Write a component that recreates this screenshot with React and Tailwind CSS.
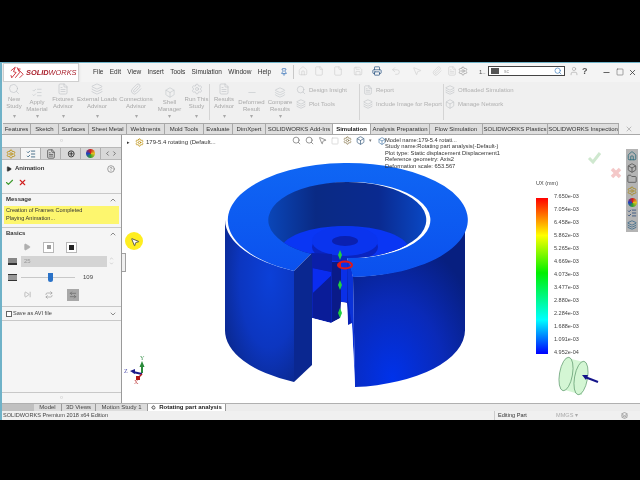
import {
  Search, Home, File, Save, Printer, Undo2, MousePointer2, Settings, User, X, Minus, Square,
  ChevronUp, ChevronDown, Check, Play, Pin, ListChecks, Paperclip, FileText, Layers, Box,
  HelpCircle, Folder, Repeat, ArrowLeftRight, SkipForward, ChevronLeft, ChevronRight, Rotate3d,
} from 'lucide-react';

const MENU = ['File', 'Edit', 'View', 'Insert', 'Tools', 'Simulation', 'Window', 'Help'];

const TABS = [
  ['Features', 'w-[28px]'],
  ['Sketch', 'w-[28px]'],
  ['Surfaces', 'w-[30px]'],
  ['Sheet Metal', 'w-[38px]'],
  ['Weldments', 'w-[38px]'],
  ['Mold Tools', 'w-[39px]'],
  ['Evaluate', 'w-[29px]'],
  ['DimXpert', 'w-[33px]'],
  ['SOLIDWORKS Add-Ins', 'w-[67px]'],
  ['Simulation', 'w-[38px]'],
  ['Analysis Preparation', 'w-[59px]'],
  ['Flow Simulation', 'w-[53px]'],
  ['SOLIDWORKS Plastics', 'w-[65px]'],
  ['SOLIDWORKS Inspection', 'w-[71px]'],
];

// label, column width, icon, top offset (some buttons sit lower in the ribbon)
const RIBBON = [
  ['New\nStudy', 'w-[22px]', Search, 'mt-[1px]'],
  ['Apply\nMaterial', 'w-[24px]', ListChecks, 'mt-[5px]'],
  ['Fixtures\nAdvisor', 'w-[28px]', FileText, 'mt-[1px]'],
  ['External Loads\nAdvisor', 'w-[40px]', Layers, 'mt-[1px]'],
  ['Connections\nAdvisor', 'w-[38px]', Paperclip, 'mt-[1px]'],
  ['Shell\nManager', 'w-[29px]', Box, 'mt-[5px]'],
  ['Run This\nStudy', 'w-[25px]', Settings, 'mt-[1px]'],
];

const RESULTS = [
  ['Results\nAdvisor', 'w-[28px]', FileText, 'mt-[1px]'],
  ['Deformed\nResult', 'w-[27px]', Minus, 'mt-[5px]'],
  ['Compare\nResults', 'w-[30px]', Layers, 'mt-[5px]'],
];

const QUICK = [
  ['w-[14px]', Home, 'text-[#c4c4c4]', 1.2],
  ['w-[18px]', File, 'text-[#c4c4c4]', 1.2],
  ['w-[20px]', File, 'text-[#c4c4c4]', 1.2],
  ['w-[20px]', Save, 'text-[#c4c4c4]', 1.2],
  ['w-[18px]', Printer, 'text-[#244f80]', 1.7],
  ['w-[19px]', Undo2, 'text-[#c4c4c4]', 1.2],
  ['w-[23px]', MousePointer2, 'text-[#c4c4c4]', 1.2],
  ['w-[18px]', Paperclip, 'text-[#c4c4c4]', 1.2],
  ['w-[12px]', FileText, 'text-[#c4c4c4]', 1.2],
  ['w-[10px]', Settings, 'text-[#808080]', 1.3],
];

const LEGEND = [
  '7.650e-03', '7.054e-03', '6.458e-03', '5.862e-03', '5.265e-03', '4.669e-03', '4.073e-03',
  '3.477e-03', '2.880e-03', '2.284e-03', '1.688e-03', '1.091e-03', '4.952e-04',
];

const STUDY_INFO = [
  'Model name:179-5.4 rotati...',
  'Study name:Rotating part analysis(-Default-)',
  'Plot type: Static displacement Displacement1',
  'Reference geometry: Axis2',
  'Deformation scale: 653.567',
];

function RibbonButton({ label, width, Icon, offset }) {
  return (
    <div className={`${width} flex flex-col items-center text-center shrink-0 h-[38px]`}>
      <Icon size={12} strokeWidth={1.2} className={`text-[#bcc0c4] mb-[1px] ${offset}`} />
      <div className="text-[6px] leading-[7px] text-[#a8a8a8] whitespace-pre">{label}</div>
      <div className="text-[6px] leading-[7px] text-[#a8a8a8] mt-auto">▾</div>
    </div>
  );
}

function SmallRibbonItem({ label, Icon }) {
  return (
    <div className="flex items-center gap-[3px] h-[14px] text-[6px] text-[#b0b0b0] whitespace-nowrap">
      <Icon size={10} strokeWidth={1.2} className="text-[#b4b8bc]" />
      {label}
    </div>
  );
}

function Logo() {
  return (
    <div className="w-[76px] h-[19px] ml-[1px] bg-white border border-[#cfcfcf] shadow-sm flex items-center pl-[6px] gap-[2px] shrink-0">
      <svg viewBox="0 0 16 14" className="w-[14px] h-[13px] shrink-0" fill="none" stroke="#c8202c" strokeWidth="1">
        <path d="M1 5 L6 1 L4 6 L7 7 L2 13 L1 10" />
        <path d="M8 1 L11 7 L6 13 M12 3 L9 3 L15 9 L11 13" />
      </svg>
      <span className="text-[7.4px] leading-none italic text-[#a81c28]">
        <b>SOLID</b>WORKS
      </span>
    </div>
  );
}

function TitleBar() {
  return (
    <div className="h-[19px] flex items-start bg-[#f4f4f4] shrink-0">
      <Logo />
      <div className="flex gap-[6.3px] ml-[14px] mt-[5px] text-[6.5px] leading-[8px] text-[#333] w-[187px] shrink-0">
        {MENU.map((m) => (
          <span key={m}>{m}</span>
        ))}
      </div>
      <Pin size={8} className="text-[#2060b0] mt-[5px] shrink-0" />
      <div className="w-px h-[14px] bg-[#c8c8c8] ml-[5px] mt-[2px] shrink-0" />
      <div className="flex items-center mt-[3px] ml-[2px] shrink-0">
        {QUICK.map(([width, Icon, color, stroke], i) => (
          <span key={i} className={`${width} flex justify-center`}>
            <Icon size={10} strokeWidth={stroke} className={color} />
          </span>
        ))}
      </div>
      <span className="text-[6px] leading-[8px] text-[#555] mt-[5px] ml-[11px] w-[9px] shrink-0">1..</span>
      <div className="w-[77px] h-[10px] mt-[3px] bg-white border border-[#444] flex items-center shrink-0">
        <span className="w-[8px] h-[6px] ml-[2px] bg-[#555]" />
        <span className="text-[5px] text-[#999] ml-[5px] leading-none">sc</span>
        <Search size={8} className="text-[#4080c0] ml-auto mr-[2px]" />
      </div>
      <User size={10} strokeWidth={1.2} className="text-[#909090] mt-[3px] ml-[4px] shrink-0" />
      <span className="text-[9px] leading-[10px] font-bold text-[#555] mt-[3px] ml-[3px] shrink-0">?</span>
      <Minus size={9} className="text-[#333] mt-[5px] ml-[14px] shrink-0" />
      <Square size={8} strokeWidth={1.3} className="text-[#333] mt-[5px] ml-[5px] shrink-0" />
      <X size={9} className="text-[#333] mt-[5px] ml-[4px] shrink-0" />
    </div>
  );
}

function Ribbon() {
  return (
    <div className="h-[40px] flex bg-[#f0f0f0] shrink-0 pl-[1px]">
      {RIBBON.map(([label, width, Icon, offset]) => (
        <RibbonButton key={label} label={label} width={width} Icon={Icon} offset={offset} />
      ))}
      <div className="w-px h-[36px] bg-[#d4d4d4] mt-[2px] shrink-0" />
      {RESULTS.map(([label, width, Icon, offset]) => (
        <RibbonButton key={label} label={label} width={width} Icon={Icon} offset={offset} />
      ))}
      <div className="w-[63px] ml-[1px] pt-[1px] shrink-0">
        <SmallRibbonItem label="Design Insight" Icon={Search} />
        <SmallRibbonItem label="Plot Tools" Icon={Layers} />
      </div>
      <div className="w-px h-[36px] bg-[#d4d4d4] mt-[2px] shrink-0" />
      <div className="w-[80px] ml-[3px] pt-[1px] shrink-0">
        <SmallRibbonItem label="Report" Icon={FileText} />
        <SmallRibbonItem label="Include Image for Report" Icon={Layers} />
      </div>
      <div className="w-px h-[36px] bg-[#d4d4d4] mt-[2px] shrink-0" />
      <div className="ml-[1px] pt-[1px] shrink-0">
        <SmallRibbonItem label="Offloaded Simulation" Icon={Layers} />
        <SmallRibbonItem label="Manage Network" Icon={Box} />
      </div>
    </div>
  );
}

function TabBar() {
  return (
    <div className="h-[13px] flex items-end bg-[#f0f0f0] border-b border-[#a8a8a8] shrink-0 pl-[1px]">
      {TABS.map(([label, width]) => (
        <div
          key={label}
          className={`${width} h-[11px] shrink-0 text-center text-[6px] leading-[10px] whitespace-nowrap border-r border-t border-[#a8a8a8] ${
            label === 'Simulation' ? 'bg-white font-bold text-[#222]' : 'bg-[#dedede] text-[#333]'
          }`}
        >
          {label}
        </div>
      ))}
      <X size={8} className="text-[#a0a0a0] ml-[6px] mb-[1px]" />
    </div>
  );
}

function PanelTabs() {
  return (
    <div className="h-[13px] flex border-y border-[#b8b8b8] bg-[#d8d8d8] shrink-0">
      <div className="w-[19px] flex items-center justify-center border-r border-[#b0b0b0]">
        <Settings size={10} className="text-[#b88a00]" />
      </div>
      <div className="w-[20px] flex items-center justify-center bg-[#f5f5f5] border-r border-[#b0b0b0]">
        <ListChecks size={10} className="text-[#2c5a78]" />
      </div>
      <div className="w-[20px] flex items-center justify-center border-r border-[#b0b0b0]">
        <FileText size={10} className="text-[#555]" />
      </div>
      <div className="w-[20px] flex items-center justify-center border-r border-[#b0b0b0] text-[#222] text-[10px] leading-none">
        ⊕
      </div>
      <div className="w-[20px] flex items-center justify-center border-r border-[#b0b0b0]">
        <span className="w-[9px] h-[9px] rounded-full bg-[conic-gradient(#d02020,#e0c020,#30a030,#2040c0,#d02020)]" />
      </div>
      <div className="flex-1 flex items-center justify-center text-[#333]">
        <ChevronLeft size={7} />
        <ChevronRight size={7} />
      </div>
    </div>
  );
}

function SectionHead({ title, children }) {
  return (
    <div className="flex items-center justify-between h-[12px] px-[4px] border-t border-[#c8c8c8]">
      <span className="text-[6px] font-bold text-[#333]">{title}</span>
      {children}
    </div>
  );
}

function LeftPanel() {
  return (
    <div className="w-[120px] h-full bg-[#f5f5f5] border-r border-[#9a9a9a] flex flex-col shrink-0">
      <div className="h-[12px] flex items-center justify-center text-[5px] text-[#888] shrink-0">○</div>
      <PanelTabs />
      <div className="flex items-center h-[15px] px-[4px] mt-[1px]">
        <Play size={6} fill="#333" className="text-[#333] mr-[3px]" />
        <span className="text-[6px] font-bold text-[#333]">Animation</span>
        <HelpCircle size={8} className="text-[#777] ml-auto mr-[2px]" />
      </div>
      <div className="flex items-center gap-[4px] h-[13px] px-[3px]">
        <Check size={9} strokeWidth={3} className="text-[#3c9a2c]" />
        <X size={9} strokeWidth={3} className="text-[#d02020]" />
      </div>
      <div className="h-[4px]" />
      <SectionHead title="Message">
        <ChevronUp size={8} className="text-[#555]" />
      </SectionHead>
      <div className="h-[18px] mx-[2px] mt-[1px] px-[2px] bg-[#fdf66e] text-[5.6px] leading-[8px] text-[#333]">
        <div>Creation of Frames Completed</div>
        <div>Playing Animation...</div>
      </div>
      <div className="h-[3px]" />
      <SectionHead title="Basics">
        <ChevronUp size={8} className="text-[#555]" />
      </SectionHead>
      <div className="h-[14px] flex items-center pl-[21px] gap-[12px] mt-[1px]">
        <Play size={8} fill="#b0b0b0" className="text-[#b0b0b0]" />
        <span className="w-[11px] h-[11px] border border-[#b8b8b8] bg-white flex items-center justify-center">
          <span className="w-[4px] h-[4px] bg-[#999]" />
        </span>
        <span className="w-[11px] h-[11px] border border-[#b8b8b8] bg-white flex items-center justify-center">
          <span className="w-[5px] h-[5px] bg-[#222]" />
        </span>
      </div>
      <div className="h-[14px] flex items-center px-[6px]">
        <span className="w-[9px] h-[7px] border-b-2 border-[#333] bg-[#888] shrink-0" />
        <span className="w-[86px] h-[11px] ml-[4px] bg-[#d4d4d4] text-[6px] leading-[11px] pl-[3px] text-[#999]">25</span>
        <span className="flex flex-col ml-[2px] text-[#aaa]">
          <ChevronUp size={5} />
          <ChevronDown size={5} />
        </span>
      </div>
      <div className="h-[19px] flex items-center px-[6px]">
        <span className="w-[9px] h-[7px] border-y border-[#333] bg-[#999] shrink-0" />
        <span className="relative w-[54px] h-[1px] bg-[#c8c8c8] ml-[4px]">
          <span className="absolute left-[27px] -top-[4px] w-[5px] h-[9px] bg-[#2a72c8] rounded-b-sm" />
        </span>
        <span className="text-[6px] text-[#444] ml-[8px]">109</span>
      </div>
      <div className="h-[15px] flex items-center pl-[22px] gap-[14px]">
        <SkipForward size={7} className="text-[#999]" />
        <Repeat size={8} className="text-[#999]" />
        <span className="w-[12px] h-[12px] bg-[#a8a8a8] flex items-center justify-center">
          <ArrowLeftRight size={8} className="text-[#666]" />
        </span>
      </div>
      <div className="h-[4px]" />
      <div className="flex items-center h-[15px] px-[4px] border-y border-[#c8c8c8]">
        <span className="w-[6px] h-[6px] border border-[#666] bg-white mr-[1px]" />
        <span className="text-[5.6px] text-[#444]">Save as AVI file</span>
        <ChevronDown size={8} className="text-[#555] ml-auto" />
      </div>
      <div className="mt-auto h-[11px] flex items-center justify-center border-t border-[#c8c8c8] text-[5px] text-[#888]">○</div>
    </div>
  );
}

function Model() {
  return (
    <svg viewBox="122 135 518 268" className="absolute inset-0 w-[518px] h-[268px]">
      <defs>
        <radialGradient id="wallL" cx="0.65" cy="0.35" r="0.8">
          <stop offset="0" stopColor="#0c40d8" />
          <stop offset="0.55" stopColor="#0c36c0" />
          <stop offset="1" stopColor="#0a2688" />
        </radialGradient>
        <radialGradient id="wallR" cx="0.35" cy="0.95" r="0.85">
          <stop offset="0" stopColor="#0032ea" />
          <stop offset="0.55" stopColor="#0a2ab8" />
          <stop offset="1" stopColor="#071f80" />
        </radialGradient>
        <linearGradient id="ring" x1="0" y1="0" x2="0" y2="1">
          <stop offset="0" stopColor="#0f66f4" />
          <stop offset="1" stopColor="#0b50ee" />
        </linearGradient>
        <linearGradient id="hole" x1="0" y1="0" x2="1" y2="0">
          <stop offset="0" stopColor="#0a46b8" />
          <stop offset="0.3" stopColor="#0a2a84" />
          <stop offset="0.7" stopColor="#0a2a90" />
          <stop offset="1" stopColor="#0a48c4" />
        </linearGradient>
        <linearGradient id="barColors" x1="0" y1="0" x2="0" y2="1">
          <stop offset="0" stopColor="#ff0000" />
          <stop offset="0.24" stopColor="#ffff00" />
          <stop offset="0.48" stopColor="#00f000" />
          <stop offset="0.78" stopColor="#00ffff" />
          <stop offset="1" stopColor="#0000ff" />
        </linearGradient>
        <clipPath id="holeClip">
          <path d="M312 254 A79 38 0 1 1 347 258 L347 262 L312 262Z" />
        </clipPath>
      </defs>

      <path d="M225 220 L225 330 A120 57 0 0 0 294 382 L294 271 A120 57 0 0 1 225 220Z" fill="url(#wallL)" />
      <path d="M353 277 L355 387 A120 57 0 0 0 465 330 L465 220 A120 57 0 0 1 353 277Z" fill="url(#wallR)" />

      {/* gap behind the cut */}
      <path d="M312 250 L352 262 L353 326 L348 326 L347 303 L341 302 L340 318 L331 323 L312 318Z" fill="#0a22b4" />
      <path d="M313 268 L331 272 L331 276 L313 293Z" fill="#0a2cf0" />
      <path d="M313 293 L331 276 L331 322 L313 318Z" fill="#0a1c98" />
      <path d="M332 255 L341 255 L341 318 L332 322Z" fill="#0a1a88" />
      <path d="M341 255 L347 255 L347 302 L341 302Z" fill="#0a30e8" />

      {/* top ring with the hole, hub and floor */}
      <path d="M294 271 A120 57 0 1 1 353 277 L347 258 A79 38 0 1 0 312 253Z" fill="url(#ring)" />
      <path d="M312 254 A79 38 0 1 1 347 258 L345 252 L312 252Z" fill="url(#hole)" />
      <g clipPath="url(#holeClip)">
        <ellipse cx="345" cy="250" rx="64" ry="24" fill="#0a36f4" />
        <ellipse cx="345" cy="247" rx="33" ry="15" fill="#0a24c0" />
        <ellipse cx="345" cy="241" rx="33" ry="15" fill="#0a34ee" />
        <ellipse cx="345" cy="241" rx="13" ry="5" fill="#0a20b0" />
      </g>
      <path d="M312 253 L332 254 L332 272 L312 268Z" fill="#0a1fa8" />

      {/* cut faces */}
      <path d="M294 271 L312 253 L312 365 L294 382Z" fill="#0a2790" />
      <path d="M347 258 L353 277 L355 387 L352 326 L348 300Z" fill="#0a32d8" />

      {/* open part of the gap */}
      <path d="M312 318 L331 323 L340 318 L341 302 L347 303 L348 325 L352 323 L355 387 L312 365Z" fill="#ffffff" />

      {/* displacement markers */}
      <path d="M340 250 L342 255 L340 260 L338 255Z M340 280 L342 285 L340 290 L338 285Z M340 308 L342 313 L340 318 L338 313Z" fill="#20d040" />
      <ellipse cx="345" cy="265" rx="7" ry="3.5" fill="none" stroke="#e01818" strokeWidth="2" />
      <path d="M337 265 L341 262 L341 268Z" fill="#e01818" />

      {/* legend */}
      <rect x="536" y="198" width="12" height="156" fill="url(#barColors)" />

      {/* orientation triad */}
      <path d="M142 373 L142 365" stroke="#2a8a3a" strokeWidth="2" />
      <path d="M142 361 L139.5 367 L144.5 367Z" fill="#2a8a3a" />
      <path d="M142 374 L133 372" stroke="#1a1a8a" strokeWidth="2" />
      <path d="M130 371 L135 369 L135 374Z" fill="#1a1a8a" />
      <rect x="136" y="376" width="4" height="4" fill="#b01818" />
      <path d="M142 374 L139 377" stroke="#b01818" strokeWidth="1.5" />
      <text x="140" y="360" fontSize="6" fill="#4a9a5a" fontFamily="Liberation Serif, serif">Y</text>
      <text x="124" y="373" fontSize="6" fill="#4a4aa8" fontFamily="Liberation Serif, serif">Z</text>
      <text x="134" y="384" fontSize="6" fill="#c04040" fontFamily="Liberation Serif, serif">X</text>

      {/* reference geometry symbol */}
      <path d="M567 358 L584 362 L582 395 L565 390Z" fill="#d4f6d4" />
      <ellipse cx="566" cy="374" rx="6.5" ry="17" transform="rotate(10 566 374)" fill="#d4f6d4" stroke="#4a8a5a" strokeWidth="0.6" />
      <ellipse cx="581" cy="378" rx="6.5" ry="17" transform="rotate(10 581 378)" fill="#d4f6d4" stroke="#4a8a5a" strokeWidth="0.6" />
      <path d="M598 382 L585 377" stroke="#14148a" strokeWidth="2" />
      <path d="M582 375 L588 375 L586 380Z" fill="#14148a" />

      {/* faded confirm corner */}
      <path d="M589 158 L593 162 L600 153" fill="none" stroke="#cfe8cf" strokeWidth="3" />
      <path d="M612 169 L620 177 M620 169 L612 177" stroke="#f4c8c8" strokeWidth="3.5" />
    </svg>
  );
}

function Canvas() {
  return (
    <div className="relative flex-1 h-full bg-white overflow-hidden">
      <Model />
      <div className="absolute left-[5px] top-[1px] flex items-center text-[6px] leading-[12px] text-[#333] whitespace-nowrap">
        <span className="text-[5px] mr-[5px]">▸</span>
        <Settings size={9} className="text-[#b88a00] mr-[2px]" />
        179-5.4 rotating (Default...
      </div>
      <div className="absolute left-[170px] top-[1px] flex items-center gap-[4px] text-[#777]">
        <Search size={9} />
        <Search size={9} />
        <MousePointer2 size={9} />
        <Square size={8} className="text-[#ccc]" />
        <Settings size={9} className="text-[#8a7a50]" />
        <Box size={9} className="text-[#4a6a88]" />
        <span className="text-[5px]">▾</span>
        <Box size={8} className="text-[#4a7aa8] ml-[2px]" />
      </div>
      <div className="absolute left-[263px] top-[2px] text-[5.75px] leading-[6.4px] text-[#333] whitespace-nowrap">
        {STUDY_INFO.map((line) => (
          <div key={line}>{line}</div>
        ))}
      </div>
      <div className="absolute left-[414px] top-[45px] text-[5.5px] leading-[7px] text-[#444]">UX (mm)</div>
      <div className="absolute left-[432px] top-[55px] flex flex-col text-[5.5px] leading-[13px] text-[#444]">
        {LEGEND.map((v) => (
          <span key={v}>{v}</span>
        ))}
      </div>
      <div className="absolute left-[504px] top-[14px] w-[12px] h-[83px] bg-[#b4b4b4] flex flex-col items-center justify-around py-[1px]">
        <Home size={10} className="text-[#2c6a7a]" />
        <Box size={10} className="text-[#555]" />
        <Folder size={10} className="text-[#555]" />
        <Settings size={10} className="text-[#a88a20]" />
        <span className="w-[9px] h-[9px] rounded-full bg-[conic-gradient(#d02020,#e0c020,#30a030,#2040c0,#d02020)]" />
        <ListChecks size={10} className="text-[#2c4a78]" />
        <Layers size={10} className="text-[#3c6a8a]" />
      </div>
      <div className="absolute left-[3px] top-[97px] w-[18px] h-[18px] rounded-full bg-[#ffee20]" />
      <MousePointer2 size={10} fill="#fff" className="absolute left-[8px] top-[102px] text-[#444]" />
      <div className="absolute left-0 top-[118px] w-[4px] h-[19px] bg-[#f0f0f0] border-y border-r border-[#a0a0a0]" />
    </div>
  );
}

function BottomTabs() {
  return (
    <div className="h-[8px] flex bg-[#ececec] border-t border-[#b0b0b0] shrink-0 text-[6px] leading-[7px] text-[#444]">
      <div className="w-[32px] bg-[#c0c0c0] shrink-0" />
      <span className="w-[28px] text-center bg-[#dcdcdc] border-r border-[#999] shrink-0">Model</span>
      <span className="w-[34px] text-center bg-[#dcdcdc] border-r border-[#999] shrink-0">3D Views</span>
      <span className="w-[52px] text-center bg-[#dcdcdc] border-r border-[#999] shrink-0">Motion Study 1</span>
      <span className="w-[78px] flex items-center justify-center gap-[3px] bg-white border-r border-[#999] font-bold text-[#222] shrink-0">
        <Rotate3d size={5} />
        Rotating part analysis
      </span>
    </div>
  );
}

function StatusBar() {
  return (
    <div className="h-[9px] flex items-center bg-[#f0f0f0] shrink-0 text-[5.6px] leading-[9px] text-[#444]">
      <span className="ml-[1px] w-[491px]">SOLIDWORKS Premium 2018 x64 Edition</span>
      <span className="w-[62px] text-[#333] border-l border-[#ccc] pl-[3px]">Editing Part</span>
      <span className="w-[37px] text-[#aaa]">MMGS ▾</span>
      <Layers size={7} className="text-[#777] ml-[28px]" />
    </div>
  );
}

export default function App() {
  return (
    <div className="w-[640px] h-[480px] bg-black flex flex-col overflow-hidden font-['Liberation_Sans',Arial,sans-serif]">
      <div className="h-[62px] shrink-0" />
      <div className="h-[358px] shrink-0 flex flex-col bg-[#f0f0f0] border-t border-l-2 border-[#6fb2c8] blur-[0.3px]">
        <TitleBar />
        <Ribbon />
        <TabBar />
        <div className="h-[268px] flex shrink-0">
          <LeftPanel />
          <Canvas />
        </div>
        <BottomTabs />
        <StatusBar />
      </div>
    </div>
  );
}
